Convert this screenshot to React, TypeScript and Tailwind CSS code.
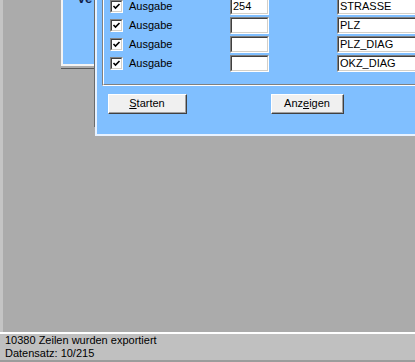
import React from 'react';

const rows = [
  { nr: '254', feld: 'STRASSE' },
  { nr: '', feld: 'PLZ' },
  { nr: '', feld: 'PLZ_DIAG' },
  { nr: '', feld: 'OKZ_DIAG' },
];

const font = { fontFamily: '"Liberation Sans", Arial, sans-serif' };

const CheckBox = () => (
  <div className="w-[13px] h-[13px] shrink-0 bg-white border-t border-l border-[#808080] border-r border-b border-r-white border-b-white">
    <div className="w-full h-full border-t border-l border-[#404040] border-r border-b border-r-[#d4d0c8] border-b-[#d4d0c8] flex items-center justify-center">
      <svg width="9" height="9" viewBox="0 0 9 9">
        <path d="M1.5 4 L3.5 6 L7.5 2" stroke="#000" strokeWidth="1.6" fill="none" />
      </svg>
    </div>
  </div>
);

const Field = ({ value, className }: { value: string; className: string }) => (
  <div className={`h-[17px] shrink-0 bg-white border-t border-l border-[#808080] border-r border-b border-r-white border-b-white ${className}`}>
    <div className="h-full border-t border-l border-[#404040] border-r border-b border-r-[#d4d0c8] border-b-[#d4d0c8] pl-[1px] text-[11px] leading-[13px] text-black">
      {value}
    </div>
  </div>
);

const WinButton = ({ children, className }: { children: React.ReactNode; className: string }) => (
  <button className={`h-[20px] shrink-0 bg-[#f0f0f0] border-t border-l border-white border-r border-b border-r-[#404040] border-b-[#404040] ${className}`}>
    <div className="h-full border-r border-b border-[#a0a0a0] flex items-center justify-center text-[11px] text-black">
      {children}
    </div>
  </button>
);

export default function App() {
  return (
    <div className="w-[415px] h-[362px] overflow-hidden flex flex-col bg-[#ababab]" style={font}>
      {/* MDI area */}
      <div className="relative h-[332px] border-l-[3px] border-[#c4c4c4] overflow-hidden">
        {/* back window */}
        <div className="absolute left-[58px] top-[-40px] w-[90px] h-[109px] pb-[2px] border-b border-[#5a5a5a]">
          <div className="h-full bg-[#80bfff] border-l-2 border-b-2 border-[#f4f4f4] pl-[14px] pt-[26px]">
            <span className="text-[13px] font-bold text-[#10204a]">Ve</span>
          </div>
        </div>

        {/* front window */}
        <div className="absolute left-[91px] top-[-30px] w-[340px] h-[157px] border-l border-b border-[#6a6a6a]">
          <div className="h-full bg-[#80bfff] border-l-2 border-b-2 border-[#e8f2ff] pl-[5px]">
            {/* group box */}
            <div className="mt-[10px] border-l border-t border-[#808080] border-b border-b-white">
              <div className="border-l border-t border-white border-b border-b-[#808080] pt-[16px] pb-[12px] flex flex-col gap-[2px]">
                {rows.map((r) => (
                  <div key={r.feld} className="h-[17px] flex items-center">
                    <div className="ml-[6px]">
                      <CheckBox />
                    </div>
                    <span className="ml-[6px] w-[101px] text-[11px] text-black">Ausgabe</span>
                    <Field value={r.nr} className="w-[39px]" />
                    <Field value={r.feld} className="ml-[68px] w-[90px]" />
                  </div>
                ))}
              </div>
            </div>
            {/* buttons */}
            <div className="mt-[8px] flex">
              <WinButton className="ml-[6px] w-[79px]">
                <span><u>S</u>tarten</span>
              </WinButton>
              <WinButton className="ml-[84px] w-[73px]">
                <span>Anz<u>e</u>igen</span>
              </WinButton>
            </div>
          </div>
        </div>
      </div>

      {/* status bar */}
      <div className="h-[30px] bg-[#c0c0c0] border-t-2 border-white border-b-2 border-b-[#9c9c9c] px-[5px] text-[11px] leading-[13px] text-black">
        <div>10380 Zeilen wurden exportiert</div>
        <div>Datensatz: 10/215</div>
      </div>
    </div>
  );
}
